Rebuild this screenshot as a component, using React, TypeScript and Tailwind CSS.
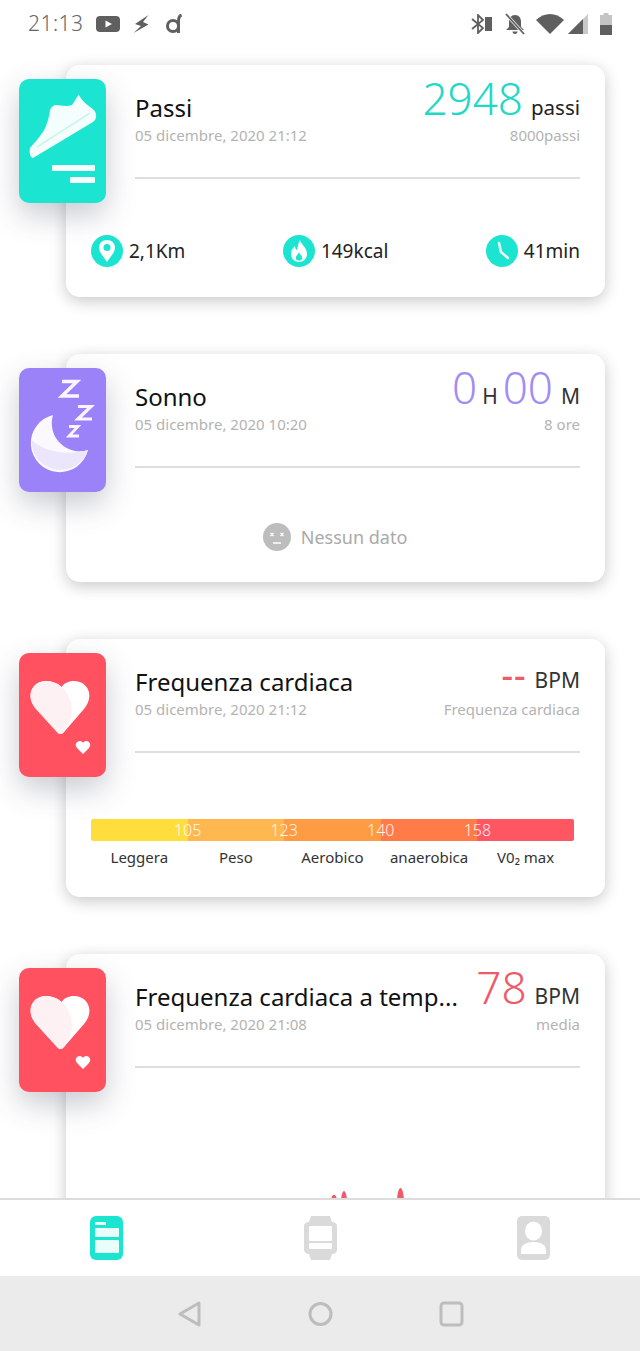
import type { ReactNode } from 'react';

const font = { fontFamily: '"Noto Sans", sans-serif' };

function Tile({ color, children }: { color: string; children: ReactNode }) {
  return (
    <div
      className={`absolute -left-[47px] top-[14px] h-[124px] w-[87px] rounded-[10px] shadow-[0_12px_30px_rgba(60,70,90,0.28)] ${color}`}
    >
      <svg viewBox="0 0 87 124" className="h-full w-full">
        {children}
      </svg>
    </div>
  );
}

function HeartIcon() {
  return (
    <>
      <path
        d="M38 79 L17 56 C6 43 13 28 27 28 C33 28 38 30 42 35 C45 30 49 28 55 28 C69 28 76 43 65 56 L45 79 C43 81.500 40 81.500 38 79 Z"
        fill="#ffffff"
      />
      <path
        d="M38 79 L17 56 C6 43 13 28 27 28 C33 28 39 30 44 35 C54 46 57 62 45 79 C43 81.500 40 81.500 38 79 Z"
        fill="#fdf1f3"
      />
      <path
        d="M64 101 L58 95 C55 91 58 88 61 88 C62.500 88 63.500 89 64 90 C64.500 89 65.500 88 67 88 C70 88 73 91 70 95 Z"
        fill="#ffffff"
      />
    </>
  );
}

function Card({
  className,
  tile,
  title,
  date,
  right,
  sub,
  children,
}: {
  className: string;
  tile: ReactNode;
  title: string;
  date: string;
  right: ReactNode;
  sub: string;
  children: ReactNode;
}) {
  return (
    <section
      className={`relative ml-[66px] w-[539px] shrink-0 rounded-[14px] bg-white shadow-[0_4px_16px_rgba(0,0,0,0.22)] ${className}`}
    >
      {tile}
      <div className="relative mr-[25px] ml-[69px] h-[114px] border-b-2 border-[#dedede]">
        <div className="flex h-[60px] items-end justify-between gap-4">
          <h2 className="min-w-0 flex-1 truncate text-[24px] leading-[34px] text-[#111]">{title}</h2>
          <div className="-mb-[2px] flex shrink-0 items-baseline gap-[8px]">{right}</div>
        </div>
        <div className="flex justify-between text-[15px] leading-[20px] text-[#b3b3b3]">
          <span>{date}</span>
          <span>{sub}</span>
        </div>
      </div>
      {children}
    </section>
  );
}

function Stat({ icon, label }: { icon: ReactNode; label: string }) {
  return (
    <div className="flex items-center gap-[6px]">
      <svg viewBox="0 0 32 32" className="h-[32px] w-[32px]">
        <circle cx="16" cy="16" r="16" fill="#1be5d0" />
        {icon}
      </svg>
      <span className="text-[19px] text-[#222]">{label}</span>
    </div>
  );
}

function StatusBar() {
  return (
    <header className="flex h-[48px] shrink-0 items-center justify-between pr-[28px] pl-[28px] text-[#666]">
      <div className="flex items-center">
        <span className="mr-[12px] text-[21px] font-light tracking-[0.5px]">21:13</span>
        <svg viewBox="0 0 24 16" className="h-[16px] w-[24px]">
          <rect width="24" height="16" rx="4" fill="#5f5f5f" />
          <path d="M9.500 4.500 L16 8 L9.500 11.500 Z" fill="#fff" />
        </svg>
        <svg viewBox="0 0 16 20" className="ml-[13px] h-[20px] w-[16px]">
          <path d="M15.500 1 L2 10 L8 12 L0.500 19 L15.500 10.500 L10 8 Z" fill="#5f5f5f" />
        </svg>
        <svg viewBox="0 0 16 20" className="ml-[17px] h-[20px] w-[16px]" fill="none" stroke="#5f5f5f" strokeWidth="3">
          <circle cx="7" cy="12" r="5.500" />
          <path d="M12.500 19 V7 C12.500 4 13 2 15.500 1" />
        </svg>
      </div>
      <div className="flex items-center">
        <svg viewBox="0 0 21 20" className="h-[20px] w-[21px]" fill="none" stroke="#5f5f5f" strokeWidth="1.800">
          <path d="M1 5 L12 14 L7 19 V1 L12 6 L1 15" />
          <rect x="14" y="3" width="7" height="14" fill="#5f5f5f" stroke="none" />
        </svg>
        <svg viewBox="0 0 22 22" className="ml-[12px] h-[22px] w-[22px]">
          <path d="M11 2 C7 2 5 5 5 9 V14 L2 17 H20 L17 14 V9 C17 5 15 2 11 2 Z M8.500 18.500 H13.500 C13.500 20 12.500 21 11 21 C9.500 21 8.500 20 8.500 18.500 Z" fill="#5f5f5f" />
          <path d="M2 1 L20 21" stroke="#fff" strokeWidth="3" />
          <path d="M2 1 L20 21" stroke="#5f5f5f" strokeWidth="1.800" />
        </svg>
        <svg viewBox="0 0 28 20" className="ml-[10px] h-[20px] w-[28px]">
          <path d="M0 6 C8 -2 20 -2 28 6 L14 20 Z" fill="#5f5f5f" />
        </svg>
        <svg viewBox="0 0 20 20" className="ml-[4px] h-[20px] w-[20px]">
          <path d="M20 0 V20 H0 Z" fill="#c9c9c9" />
          <path d="M15 5 V20 H0 Z" fill="#5f5f5f" />
        </svg>
        <svg viewBox="0 0 12 22" className="ml-[12px] h-[22px] w-[12px]">
          <path d="M3.500 0 H8.500 V2 H12 V22 H0 V2 H3.500 Z" fill="#c4c4c4" />
          <rect y="12" width="12" height="10" fill="#5f5f5f" />
        </svg>
      </div>
    </header>
  );
}

const zones = [
  { name: 'Leggera', color: 'bg-[#ffdd3c]', mark: '105' },
  { name: 'Peso', color: 'bg-[#ffb74f]', mark: '123' },
  { name: 'Aerobico', color: 'bg-[#ff9a45]', mark: '140' },
  { name: 'anaerobica', color: 'bg-[#ff7b48]', mark: '158' },
  { name: 'V0₂ max', color: 'bg-[#ff5664]', mark: '' },
];

function ZoneBar() {
  return (
    <div className="mt-[66px] ml-[25px] w-[483px]">
      <div className="flex h-[22px] overflow-hidden rounded-[2px]">
        {zones.map((z) => (
          <div key={z.name} className={`relative flex-1 ${z.color}`}>
            {z.mark && (
              <span className="absolute -right-[20px] z-10 w-[40px] text-center text-[16px] leading-[22px] font-light text-white/90">
                {z.mark}
              </span>
            )}
          </div>
        ))}
      </div>
      <div className="mt-[5px] flex">
        {zones.map((z) => (
          <span key={z.name} className="flex-1 text-center text-[15px] leading-[22px] text-[#333]">
            {z.name}
          </span>
        ))}
      </div>
    </div>
  );
}

export default function App() {
  return (
    <div className="flex h-[1351px] w-[640px] flex-col overflow-hidden bg-white" style={font}>
      <StatusBar />

      <main className="flex min-h-0 flex-1 flex-col gap-[57px] overflow-hidden pt-[17px]">
        <Card
          className="h-[232px]"
          tile={
            <Tile color="bg-[#1be5d0]">
              <path
                d="M14 79 L74 43 C78 40 78 35 75 31 L66 24 C63 21 61 18 60 16 C58 17 56 22 53 26 C47 28 41 26 36 26 C33 27 32 29 31 31 C30 40 27 48 24 53 C20 59 15 64 11 69 C10 74 11 78 14 79 Z"
                fill="#f4fefc"
              />
              <path d="M18 68 L71 34" stroke="#c9f6ef" strokeWidth="1.500" fill="none" />
              <rect x="33" y="86" width="43" height="6" rx="1" fill="#f4fefc" />
              <rect x="51" y="98" width="25" height="6" rx="1" fill="#f4fefc" />
            </Tile>
          }
          title="Passi"
          date="05 dicembre, 2020 21:12"
          sub="8000passi"
          right={
            <>
              <span className="text-[44px] leading-[58px] font-light text-[#1fd8c6]">2948</span>
              <span className="text-[20.500px] text-[#222]">passi</span>
            </>
          }
        >
          <div className="mt-[56px] mr-[25px] ml-[25px] flex justify-between">
            <Stat
              label="2,1Km"
              icon={
                <>
                  <path d="M16 27 C12 21 8 17 8 12.500 C8 8 11.500 5 16 5 C20.500 5 24 8 24 12.500 C24 17 20 21 16 27 Z" fill="#fff" />
                  <circle cx="16" cy="12.500" r="3.500" fill="#1be5d0" />
                </>
              }
            />
            <Stat
              label="149kcal"
              icon={
                <>
                  <path d="M17 5 C18 10 24 12 24 19 C24 24 20 27 16 27 C12 27 8 24 8 19 C8 15 10 13 12 11 C12 13 13 15 14 15 C15 12 15 8 17 5 Z" fill="#fff" />
                  <path d="M16 17 C17 20 20 21 19 24 C18 26 14 26 13 24 C12 21 15 20 16 17 Z" fill="#1be5d0" />
                </>
              }
            />
            <Stat
              label="41min"
              icon={<path d="M13 8 L15 17 L22 23" stroke="#f2fdfb" strokeWidth="2.500" fill="none" strokeLinecap="round" />}
            />
          </div>
        </Card>

        <Card
          className="h-[228px]"
          tile={
            <Tile color="bg-[#9b82f8]">
              <path d="M34 47 A29 29 0 1 0 69 82 A28 28 0 0 1 34 47 Z" fill="#fbf9ff" />
              <path d="M12.500 72 C25 84 50 88 69 82 A29 29 0 0 1 12.500 72 Z" fill="#ece6fd" />
              <path d="M43 13.500 H58 L43 28 H60" fill="none" stroke="#f9f6ff" strokeWidth="3.500" />
              <path d="M59 38.500 H72 L59 51 H73" fill="none" stroke="#f9f6ff" strokeWidth="3.200" />
              <path d="M50 58.500 H59 L50 68 H60" fill="none" stroke="#f9f6ff" strokeWidth="2.800" />
            </Tile>
          }
          title="Sonno"
          date="05 dicembre, 2020 10:20"
          sub="8 ore"
          right={
            <>
              <span className="flex items-baseline gap-[5px]">
                <span className="text-[44px] leading-[58px] font-light text-[#a18cf5]">0</span>
                <span className="text-[21px] text-[#333]">H</span>
                <span className="text-[44px] leading-[58px] font-light text-[#a18cf5]">00</span>
              </span>
              <span className="text-[21px] text-[#333]">M</span>
            </>
          }
        >
          <div className="mt-[55px] flex items-center justify-center gap-[10px] pr-[1px]">
            <svg viewBox="0 0 28 28" className="h-[28px] w-[28px]">
              <circle cx="14" cy="14" r="14" fill="#bdbdbd" />
              <path d="M7.500 10 L10.500 13 M10.500 10 L7.500 13 M17.500 10 L20.500 13 M20.500 10 L17.500 13 M10 20 H18" stroke="#fff" strokeWidth="1.300" />
            </svg>
            <span className="text-[18px] text-[#aaa]">Nessun dato</span>
          </div>
        </Card>

        <Card
          className="h-[258px]"
          tile={
            <Tile color="bg-[#ff5160]">
              <HeartIcon />
            </Tile>
          }
          title="Frequenza cardiaca"
          date="05 dicembre, 2020 21:12"
          sub="Frequenza cardiaca"
          right={
            <>
              <span className="mb-[6px] text-[36px] leading-[30px] font-medium tracking-[1px] text-[#f0596a]">--</span>
              <span className="mb-[6px] text-[21px] leading-[30px] text-[#333]">BPM</span>
            </>
          }
        >
          <ZoneBar />
        </Card>

        <Card
          className="h-[300px]"
          tile={
            <Tile color="bg-[#ff5160]">
              <HeartIcon />
            </Tile>
          }
          title="Frequenza cardiaca a temp..."
          date="05 dicembre, 2020 21:08"
          sub="media"
          right={
            <>
              <span className="text-[44px] leading-[58px] font-light text-[#f0596a]">78</span>
              <span className="text-[21px] text-[#333]">BPM</span>
            </>
          }
        >
          <svg viewBox="0 0 539 132" className="h-[132px] w-[539px]">
            <path
              d="M265 132 C266 125 270 125 271 132 Z M275 132 C276 120 280 120 281 132 Z M331 132 C332 116 337 116 338 132 Z M341 132 C342 129 344 129 345 132 Z"
              fill="#f0596a"
            />
          </svg>
        </Card>
      </main>

      <nav className="flex h-[78px] shrink-0 items-center justify-between border-t-2 border-[#dcdcdc] bg-white pr-[90px] pl-[90px]">
        <svg viewBox="0 0 33 44" className="h-[44px] w-[33px]">
          <rect width="33" height="44" rx="6" fill="#1be5d0" />
          <rect x="5" y="6" width="11" height="3" fill="#e9fdfa" />
          <rect x="5" y="12" width="24" height="9" rx="1" fill="#e9fdfa" />
          <rect x="5" y="24" width="24" height="13" rx="1" fill="#e9fdfa" />
        </svg>
        <svg viewBox="0 0 33 44" className="h-[44px] w-[33px]">
          <path d="M7 0 H26 L28 6 C31 6 33 8 33 10 V34 C33 36 31 38 28 38 L26 44 H7 L5 38 C2 38 0 36 0 34 V10 C0 8 2 6 5 6 Z" fill="#dadada" />
          <rect x="5" y="10" width="23" height="15" rx="1" fill="#fff" />
          <rect x="5" y="27" width="23" height="6" rx="1" fill="#fff" />
        </svg>
        <svg viewBox="0 0 33 44" className="h-[44px] w-[33px]">
          <rect width="33" height="44" rx="5" fill="#dadada" />
          <ellipse cx="16.500" cy="15" rx="8.500" ry="9.500" fill="#fff" />
          <path d="M4 38 V34 C4 29 9 26 16.500 26 C24 26 29 29 29 34 V38 Z" fill="#fff" />
        </svg>
      </nav>

      <footer className="flex h-[75px] shrink-0 items-center justify-center gap-[106px] bg-[#ebebeb]">
        <svg viewBox="0 0 25 26" className="h-[26px] w-[25px]" fill="none" stroke="#bdbdbd" strokeWidth="3" strokeLinejoin="round">
          <path d="M22 2 V24 L3 13 Z" />
        </svg>
        <svg viewBox="0 0 25 26" className="h-[26px] w-[25px]" fill="none" stroke="#bdbdbd" strokeWidth="3">
          <circle cx="12.500" cy="13" r="10.500" />
        </svg>
        <svg viewBox="0 0 25 26" className="h-[26px] w-[25px]" fill="none" stroke="#bdbdbd" strokeWidth="3">
          <rect x="2" y="2" width="21" height="22" rx="3" />
        </svg>
      </footer>
    </div>
  );
}
